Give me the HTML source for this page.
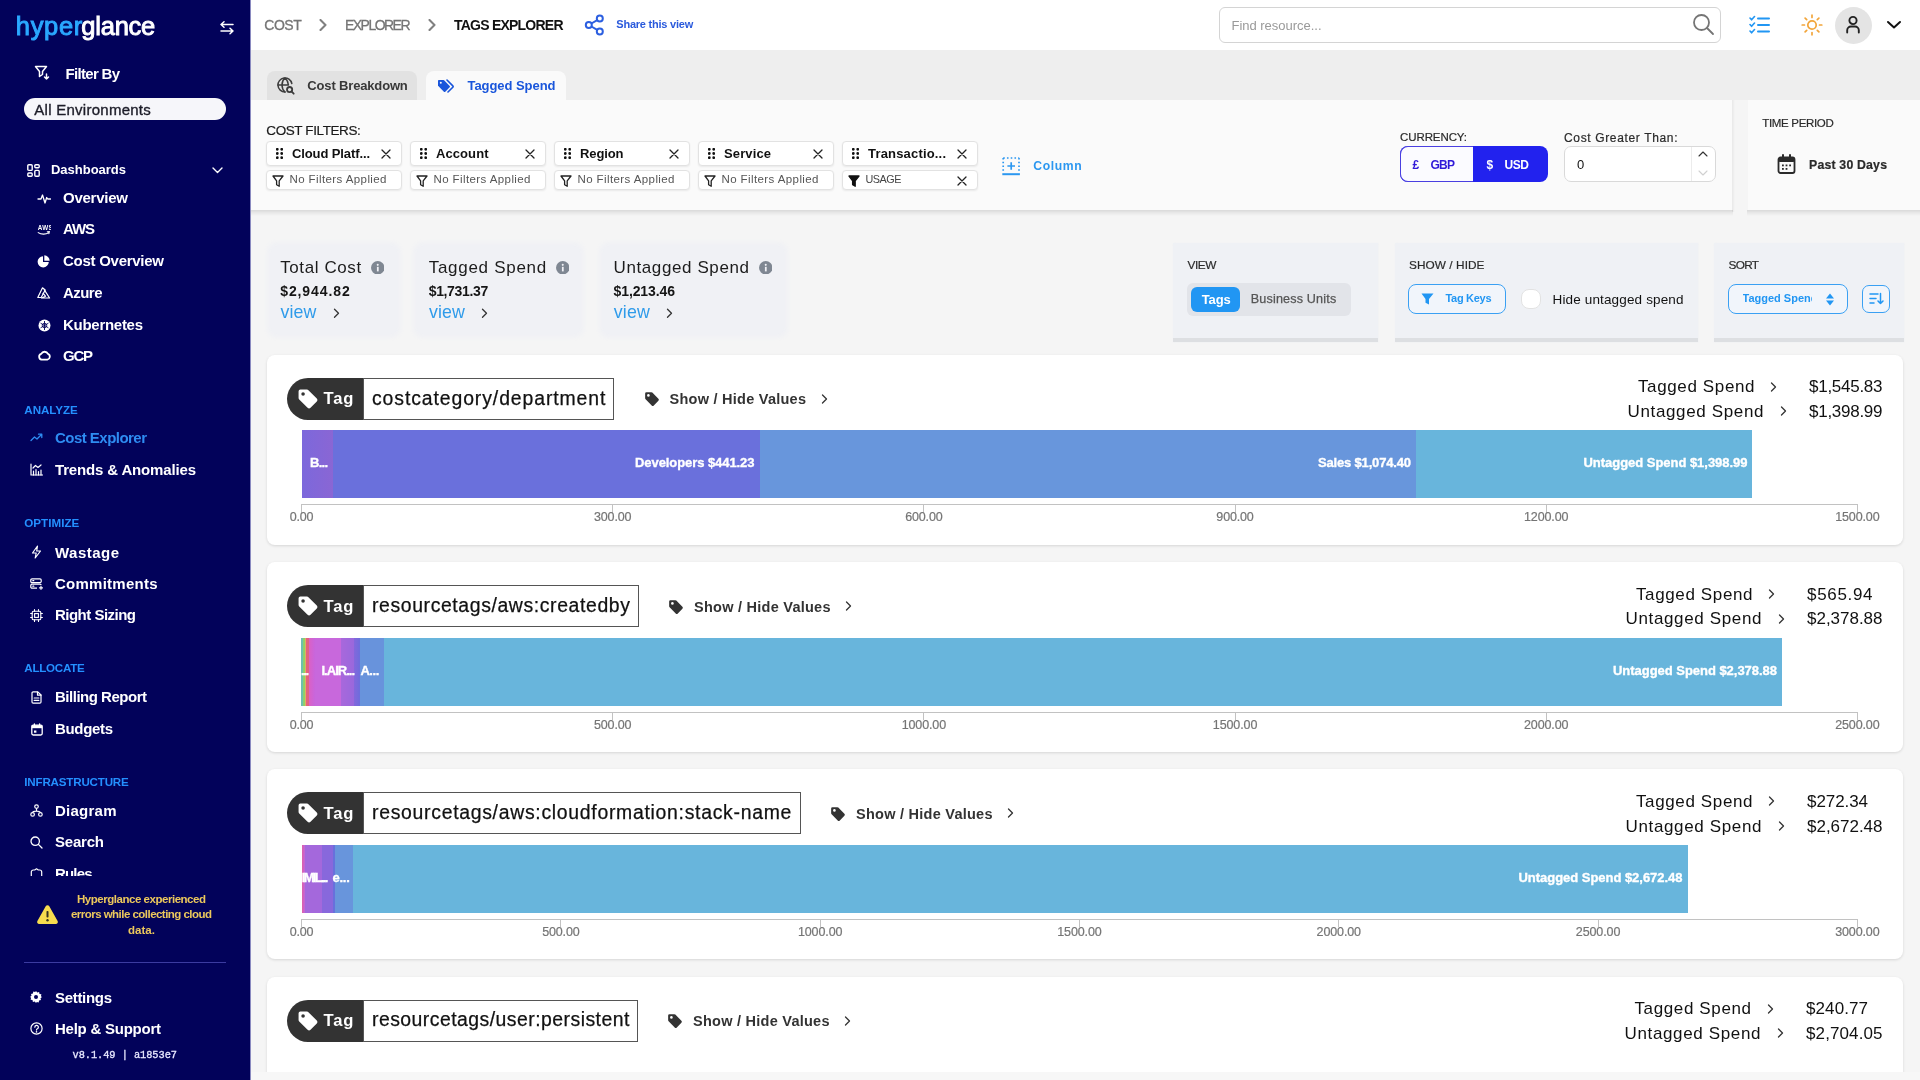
<!DOCTYPE html>
<html><head><meta charset="utf-8"><title>Hyperglance - Tags Explorer</title>
<style>
html,body{margin:0;padding:0;}
body{width:1920px;height:1080px;overflow:hidden;background:#f5f5f5;position:relative;font-family:"Liberation Sans",sans-serif;}
.b{position:absolute;box-sizing:border-box;display:block;}
.t{position:absolute;white-space:nowrap;display:block;}
#root{position:absolute;left:0;top:0;width:1920px;height:1080px;overflow:hidden;will-change:transform;}
</style></head><body><div id="root">
<div class="b" style="left:0px;top:0px;width:250px;height:1080px;background:#02025a;"></div>
<div class="b" style="left:250px;top:0px;width:1px;height:1080px;background:#8a8ac0;"></div>
<span class="t" style="top:14.31px;font:400 25.5px/1 'Liberation Sans',sans-serif;color:#2aaaff;letter-spacing:0.678px;left:15.80px;-webkit-text-stroke:0.95px #2aa7ff;">hyper</span>
<span class="t" style="top:14.31px;font:400 25.5px/1 'Liberation Sans',sans-serif;color:#ffffff;letter-spacing:-0.229px;left:81.30px;-webkit-text-stroke:0.95px #fff;">glance</span>
<svg class="b" style="left:219px;top:21px;" width="16" height="14" viewBox="0 0 16 14"><g fill="none" stroke="#fff" stroke-width="1.5" stroke-linecap="round" stroke-linejoin="round"><path d="M14 3.5H2M5 0.8l-3 2.7 3 2.7"/><path d="M2 10H14M11 7.3l3 2.7-3 2.7"/></g></svg>
<svg class="b" style="left:34px;top:65px;" width="16" height="16" viewBox="0 0 16 16"><g fill="none" stroke="#fff" stroke-width="1.5" stroke-linecap="round" stroke-linejoin="round"><path d="M1.5 1.5h11l-4 5v3l-3 2v-5z"/><path d="M12.5 9v5M10.5 12l2 2 2-2"/></g></svg>
<span class="t" style="top:66.00px;font:600 15px/1 'Liberation Sans',sans-serif;color:#ffffff;letter-spacing:-0.689px;left:65.50px;">Filter By</span>
<div class="b" style="left:24px;top:98px;width:202px;height:22px;background:#f6f6fa;border-radius:11px;"></div>
<span class="t" style="top:101.60px;font:400 15px/1 'Liberation Sans',sans-serif;color:#1c1c28;letter-spacing:0.264px;left:34.30px;-webkit-text-stroke:0.35px #1c1c28;">All Environments</span>
<svg class="b" style="left:27px;top:164px;" width="13" height="13" viewBox="0 0 13 13"><g fill="none" stroke="#fff" stroke-width="1.4"><rect x="0.8" y="0.8" width="4.4" height="5.6" rx="1"/><rect x="7.8" y="0.8" width="4.4" height="3" rx="1"/><rect x="0.8" y="9" width="4.4" height="3.2" rx="1"/><rect x="7.8" y="6.4" width="4.4" height="5.8" rx="1"/></g></svg>
<span class="t" style="top:163.00px;font:700 13px/1 'Liberation Sans',sans-serif;color:#ffffff;letter-spacing:-0.015px;left:51.00px;">Dashboards</span>
<svg class="b" style="left:212px;top:167px;" width="11" height="7" viewBox="0 0 11 7"><path d="M1 1l4.5 4.5L10 1" fill="none" stroke="#fff" stroke-width="1.4" stroke-linecap="round" stroke-linejoin="round"/></svg>
<span class="t" style="top:189.50px;font:600 15px/1 'Liberation Sans',sans-serif;color:#ffffff;letter-spacing:-0.244px;left:63.00px;">Overview</span>
<svg class="b" style="left:37px;top:192px;" width="14" height="13" viewBox="0 0 14 13"><path d="M1 7h3l1.5-4 2.5 8 1.7-5.5 1 1.5H13.5" fill="none" stroke="#fff" stroke-width="1.3" stroke-linecap="round" stroke-linejoin="round"/></svg>
<span class="t" style="top:221.30px;font:600 15px/1 'Liberation Sans',sans-serif;color:#ffffff;letter-spacing:-1.084px;left:63.00px;">AWS</span>
<svg class="b" style="left:37px;top:224px;" width="14" height="13" viewBox="0 0 14 13"><g fill="none" stroke="#fff" stroke-width="1.1" stroke-linecap="round"><path d="M1.200 8.600c3 2 7.500 2 10.300 0.300"/><path d="M10.300 7.900l2-.200-.400 1.900"/></g><text x="0.800" y="6.200" font-family="Liberation Sans" font-weight="700" font-size="6.300" letter-spacing="0.300" fill="#fff">AWS</text></svg>
<span class="t" style="top:253.30px;font:600 15px/1 'Liberation Sans',sans-serif;color:#ffffff;letter-spacing:-0.267px;left:63.00px;">Cost Overview</span>
<svg class="b" style="left:37px;top:255px;" width="13" height="13" viewBox="0 0 13 13"><path d="M6 1.2A5.6 5.6 0 1 0 11.8 7H6z" fill="#fff"/><path d="M7.3 0.3a5.6 5.6 0 0 1 5.4 5.4H7.3z" fill="#fff"/></svg>
<span class="t" style="top:285.30px;font:600 15px/1 'Liberation Sans',sans-serif;color:#ffffff;letter-spacing:-0.544px;left:63.00px;">Azure</span>
<svg class="b" style="left:37px;top:287px;" width="14" height="12" viewBox="0 0 14 12"><g fill="none" stroke="#fff" stroke-width="1.2" stroke-linejoin="round"><path d="M5.5 0.8L0.8 10.5h3.4L8.2 3z"/><path d="M7 2.4l5.6 8.6H4.5l4-1.8-2.8-3.4"/></g></svg>
<span class="t" style="top:317.30px;font:600 15px/1 'Liberation Sans',sans-serif;color:#ffffff;letter-spacing:-0.280px;left:63.00px;">Kubernetes</span>
<svg class="b" style="left:37.5px;top:319px;" width="13" height="13" viewBox="0 0 13 13"><circle cx="6.5" cy="6.5" r="6" fill="#fff"/><g stroke="#02025a" stroke-width="0.9" fill="none"><circle cx="6.5" cy="6.5" r="2.2"/><path d="M6.5 2v9M2.6 4.2l7.8 4.6M2.6 8.8l7.8-4.6"/></g></svg>
<span class="t" style="top:348.30px;font:600 15px/1 'Liberation Sans',sans-serif;color:#ffffff;letter-spacing:-1.253px;left:63.00px;">GCP</span>
<svg class="b" style="left:37.5px;top:350px;" width="13" height="11" viewBox="0 0 13 11"><path d="M3.6 9.6A3 3 0 0 1 3.2 3.8 3.8 3.8 0 0 1 10 3.9a3 3 0 0 1-.6 5.7z" fill="none" stroke="#fff" stroke-width="1.8" stroke-linejoin="round"/></svg>
<span class="t" style="top:404.38px;font:700 11.6px/1 'Liberation Sans',sans-serif;color:#2490ff;letter-spacing:-0.035px;left:24.30px;">ANALYZE</span>
<span class="t" style="top:430.30px;font:600 15px/1 'Liberation Sans',sans-serif;color:#2e8cf2;letter-spacing:-0.530px;left:55.00px;">Cost Explorer</span>
<svg class="b" style="left:30px;top:433px;" width="13" height="9" viewBox="0 0 13 9"><path d="M1 7.5l3.5-3.5 2.5 2 4.5-4.5M8.5 1.2h3.3v3.3" fill="none" stroke="#2e8cf2" stroke-width="1.3" stroke-linecap="round" stroke-linejoin="round"/></svg>
<span class="t" style="top:461.50px;font:600 15px/1 'Liberation Sans',sans-serif;color:#ffffff;letter-spacing:-0.156px;left:55.00px;">Trends &amp; Anomalies</span>
<svg class="b" style="left:30px;top:463px;" width="13" height="13" viewBox="0 0 13 13"><g fill="none" stroke="#fff" stroke-width="1.2" stroke-linecap="round" stroke-linejoin="round"><path d="M1 1v11h11.5"/><path d="M3.5 12V8M6 12V6.5M8.5 12V8.5M11 12V7"/><path d="M3 5l2.5-2.5 2.5 2 3-2.5"/></g></svg>
<span class="t" style="top:517.18px;font:700 11.6px/1 'Liberation Sans',sans-serif;color:#2490ff;letter-spacing:0.032px;left:24.30px;">OPTIMIZE</span>
<span class="t" style="top:544.50px;font:600 15px/1 'Liberation Sans',sans-serif;color:#ffffff;letter-spacing:0.479px;left:55.00px;">Wastage</span>
<svg class="b" style="left:31px;top:545px;" width="11" height="14" viewBox="0 0 11 14"><path d="M6.5 1L1.5 8h3.7L4.2 13l5.3-7H5.7z" fill="none" stroke="#fff" stroke-width="1.2" stroke-linejoin="round"/></svg>
<span class="t" style="top:575.50px;font:600 15px/1 'Liberation Sans',sans-serif;color:#ffffff;letter-spacing:0.249px;left:55.00px;">Commitments</span>
<svg class="b" style="left:30px;top:578px;" width="13" height="12" viewBox="0 0 13 12"><g fill="none" stroke="#fff" stroke-width="1.2" stroke-linejoin="round"><rect x="0.8" y="0.8" width="10.4" height="3.8" rx="1.2"/><path d="M7 10.2H2a1.2 1.2 0 0 1-1.2-1.2V7.4A1.2 1.2 0 0 1 2 6.2h8a1.2 1.2 0 0 1 1.2 1"/><path d="M2.8 2.7h1M2.8 8.2h1M11 8.3v3M9.5 9.8h3" stroke-linecap="round"/></g></svg>
<span class="t" style="top:607.30px;font:600 15px/1 'Liberation Sans',sans-serif;color:#ffffff;letter-spacing:-0.514px;left:55.00px;">Right Sizing</span>
<svg class="b" style="left:30px;top:609px;" width="13" height="13" viewBox="0 0 13 13"><g fill="none" stroke="#fff" stroke-width="1.1" stroke-linecap="round"><rect x="2.2" y="2.2" width="8.6" height="8.6" rx="1.4"/><rect x="4.6" y="4.6" width="3.8" height="3.8"/><path d="M4.5 0.6v1.6M8.5 0.6v1.6M4.5 10.8v1.6M8.5 10.8v1.6M0.6 4.5h1.6M0.6 8.5h1.6M10.8 4.5h1.6M10.8 8.5h1.6"/></g></svg>
<span class="t" style="top:662.18px;font:700 11.6px/1 'Liberation Sans',sans-serif;color:#2490ff;letter-spacing:-0.255px;left:24.30px;">ALLOCATE</span>
<span class="t" style="top:689.30px;font:600 15px/1 'Liberation Sans',sans-serif;color:#ffffff;letter-spacing:-0.487px;left:55.00px;">Billing Report</span>
<svg class="b" style="left:31px;top:691px;" width="11" height="13" viewBox="0 0 11 13"><g fill="none" stroke="#fff" stroke-width="1.2" stroke-linejoin="round" stroke-linecap="round"><path d="M1 2a1.2 1.2 0 0 1 1.2-1.2h4.6L10 4v7a1.2 1.2 0 0 1-1.2 1.2H2.2A1.2 1.2 0 0 1 1 11z"/><path d="M6.5 1v3.2H10M3.2 7h4.6M3.2 9.4h4.6"/></g></svg>
<span class="t" style="top:721.30px;font:600 15px/1 'Liberation Sans',sans-serif;color:#ffffff;letter-spacing:-0.333px;left:55.00px;">Budgets</span>
<svg class="b" style="left:30.5px;top:723px;" width="12" height="13" viewBox="0 0 12 13"><g fill="none" stroke="#fff" stroke-width="1.3" stroke-linejoin="round" stroke-linecap="round"><rect x="0.8" y="2.2" width="10.4" height="9.8" rx="1.4"/><path d="M3.4 0.8v2.4M8.6 0.8v2.4"/></g><rect x="0.8" y="2.2" width="10.4" height="3" fill="#fff"/><rect x="3" y="7.5" width="2.4" height="2.2" fill="#fff"/></svg>
<span class="t" style="top:776.18px;font:700 11.6px/1 'Liberation Sans',sans-serif;color:#2490ff;letter-spacing:-0.190px;left:24.30px;">INFRASTRUCTURE</span>
<span class="t" style="top:802.50px;font:600 15px/1 'Liberation Sans',sans-serif;color:#ffffff;letter-spacing:0.246px;left:55.00px;">Diagram</span>
<svg class="b" style="left:30px;top:804px;" width="13" height="13" viewBox="0 0 13 13"><g fill="none" stroke="#fff" stroke-width="1.2"><circle cx="6.5" cy="2.6" r="1.8"/><circle cx="2.6" cy="10.4" r="1.8"/><circle cx="10.4" cy="10.4" r="1.8"/><path d="M6.5 4.4v2.4M2.6 8.6c0-2 7.8-2 7.8 0"/></g></svg>
<span class="t" style="top:834.30px;font:600 15px/1 'Liberation Sans',sans-serif;color:#ffffff;letter-spacing:-0.206px;left:55.00px;">Search</span>
<svg class="b" style="left:30px;top:836px;" width="13" height="13" viewBox="0 0 13 13"><g fill="none" stroke="#fff" stroke-width="1.3" stroke-linecap="round"><circle cx="5.2" cy="5.2" r="4.2"/><path d="M8.4 8.4l3.6 3.6"/></g></svg>
<div class="b" style="left:0;top:860px;width:250px;height:16.2px;overflow:hidden;"><span class="t" style="top:5.50px;font:600 15px/1 'Liberation Sans',sans-serif;color:#ffffff;letter-spacing:-0.837px;left:55.00px;">Rules</span><svg class="b" style="left:30px;top:7px;" width="13" height="13" viewBox="0 0 13 13"><path d="M1.300 11V5a2 2 0 0 1 2-2h1.400l1.800-1.200L8.300 3h1.400a2 2 0 0 1 2 2v6" fill="none" stroke="#fff" stroke-width="1.200" stroke-linejoin="round"/></svg></div>
<svg class="b" style="left:35.5px;top:904px;" width="23" height="21" viewBox="0 0 23 21"><path d="M11.5 1.2c.8 0 1.4.4 1.8 1.1l8.3 14.6c.8 1.4-.2 3.1-1.8 3.1H3.2c-1.6 0-2.6-1.7-1.8-3.1L9.7 2.3c.4-.7 1-1.1 1.800-1.100z" fill="#f7dc4e"/><rect x="10.5" y="7" width="2" height="6.6" rx="0.8" fill="#3a3520"/><circle cx="11.5" cy="16.3" r="1.2" fill="#3a3520"/></svg>
<span class="t" style="top:893.57px;font:600 11.5px/1 'Liberation Sans',sans-serif;color:#ecc85c;letter-spacing:-0.470px;left:-358.50px;width:1000px;text-align:center;text-indent:-0.470px;">Hyperglance experienced</span>
<span class="t" style="top:908.77px;font:600 11.5px/1 'Liberation Sans',sans-serif;color:#ecc85c;letter-spacing:-0.533px;left:-358.50px;width:1000px;text-align:center;text-indent:-0.533px;">errors while collecting cloud</span>
<span class="t" style="top:924.57px;font:600 11.5px/1 'Liberation Sans',sans-serif;color:#ecc85c;letter-spacing:0.040px;left:-358.50px;width:1000px;text-align:center;text-indent:0.040px;">data.</span>
<div class="b" style="left:24px;top:961.5px;width:202px;height:1.0px;background:#3b3ba0;"></div>
<span class="t" style="top:989.50px;font:600 15px/1 'Liberation Sans',sans-serif;color:#ffffff;letter-spacing:-0.310px;left:55.00px;">Settings</span>
<svg class="b" style="left:29.5px;top:991px;" width="12" height="12" viewBox="0 0 12 12"><path d="M6 0l1.2 1.5 1.9-.5.4 1.9 1.9.4-.5 1.9L12 6l-1.500 1.200.5 1.9-1.9.4-.4 1.9-1.900-.500L6 12l-1.200-1.500-1.900.5-.4-1.900-1.900-.400.5-1.900L0 6l1.500-1.200-.5-1.900 1.900-.400.4-1.900 1.900.5z" fill="#fff"/><circle cx="6" cy="6" r="2" fill="#02025a"/></svg>
<span class="t" style="top:1020.50px;font:600 15px/1 'Liberation Sans',sans-serif;color:#ffffff;letter-spacing:-0.243px;left:55.00px;">Help &amp; Support</span>
<svg class="b" style="left:29.5px;top:1022px;" width="13" height="13" viewBox="0 0 13 13"><circle cx="6.5" cy="6.5" r="5.6" fill="none" stroke="#fff" stroke-width="1.2"/><path d="M4.800 5.200a1.8 1.800 0 1 1 2.600 1.600c-.6.3-.9.700-.9 1.300" fill="none" stroke="#fff" stroke-width="1.200" stroke-linecap="round"/><circle cx="6.5" cy="9.900" r=".8" fill="#fff"/></svg>
<span class="t" style="top:1050.28px;font:400 10.3px/1 'Liberation Mono',monospace;color:#e8e8ff;letter-spacing:-0.036px;left:72.50px;-webkit-text-stroke:0.3px #e8e8ff;">v8.1.49 | a1853e7</span>
<div class="b" style="left:251px;top:0px;width:1669px;height:50px;background:#ffffff;"></div>
<div class="b" style="left:251px;top:50px;width:1669px;height:50px;background:#eeeeee;"></div>
<span class="t" style="top:18.15px;font:400 14px/1 'Liberation Sans',sans-serif;color:#757575;letter-spacing:-0.463px;left:264.30px;-webkit-text-stroke:0.3px #757575;">COST</span>
<svg class="b" style="left:319px;top:19px;" width="8" height="12" viewBox="0 0 8 12"><path d="M1.5 1l5 5-5 5" fill="none" stroke="#808080" stroke-width="2.1" stroke-linecap="round" stroke-linejoin="round"/></svg>
<span class="t" style="top:18.15px;font:400 14px/1 'Liberation Sans',sans-serif;color:#757575;letter-spacing:-1.536px;left:345.00px;-webkit-text-stroke:0.3px #757575;">EXPLORER</span>
<svg class="b" style="left:428px;top:19px;" width="8" height="12" viewBox="0 0 8 12"><path d="M1.5 1l5 5-5 5" fill="none" stroke="#808080" stroke-width="2.1" stroke-linecap="round" stroke-linejoin="round"/></svg>
<span class="t" style="top:18.15px;font:700 14px/1 'Liberation Sans',sans-serif;color:#111;letter-spacing:-0.771px;left:454.00px;">TAGS EXPLORER</span>
<svg class="b" style="left:583.5px;top:13.5px;" width="22" height="22" viewBox="0 0 22 22"><g fill="none" stroke="#2c5fe0" stroke-width="2"><circle cx="15.8" cy="4.5" r="3"/><circle cx="4.800" cy="11" r="3"/><circle cx="15.800" cy="17.500" r="3"/><path d="M7.400 9.500l5.800-3.400M7.400 12.500l5.800 3.400"/></g></svg>
<span class="t" style="top:18.69px;font:700 11px/1 'Liberation Sans',sans-serif;color:#2a5adc;letter-spacing:-0.221px;left:616.30px;">Share this view</span>
<div class="b" style="left:1219px;top:7px;width:502px;height:36px;background:#fff;border:1px solid #d4d4d4;border-radius:6px;"></div>
<span class="t" style="top:19.00px;font:400 13px/1 'Liberation Sans',sans-serif;color:#9a9a9a;letter-spacing:-0.021px;left:1231.50px;">Find resource...</span>
<svg class="b" style="left:1692px;top:13px;" width="23" height="23" viewBox="0 0 23 23"><g fill="none" stroke="#757575" stroke-width="1.8" stroke-linecap="round"><circle cx="9.500" cy="9.500" r="7.5"/><path d="M15 15l6 6"/></g></svg>
<svg class="b" style="left:1749px;top:15px;" width="22" height="20" viewBox="0 0 22 20"><g fill="none" stroke="#2196f3" stroke-width="2" stroke-linecap="round" stroke-linejoin="round"><path d="M9 3.500h11M9 10h11M9 16.500h11"/><path d="M1 3l1.600 1.800L5.500 1.500M1 9.500l1.600 1.800L5.500 8M1 16l1.600 1.800L5.500 14.500" stroke-width="1.600"/></g></svg>
<svg class="b" style="left:1800.5px;top:13.5px;" width="22" height="22" viewBox="0 0 22 22"><g fill="none" stroke="#f2a53a" stroke-width="1.700" stroke-linecap="round"><circle cx="11" cy="11" r="4.200"/><path d="M11 1.200v2.300M11 18.500v2.300M1.200 11h2.300M18.500 11h2.300M4.100 4.100l1.600 1.600M16.300 16.300l1.600 1.600M4.100 17.900l1.600-1.600M16.300 5.700l1.600-1.600"/></g></svg>
<div class="b" style="left:1834.5px;top:6.5px;width:37.0px;height:37.0px;background:#e4e4e4;border-radius:50%;"></div>
<svg class="b" style="left:1845px;top:15px;" width="16" height="20" viewBox="0 0 16 20"><g fill="none" stroke="#222" stroke-width="1.900" stroke-linecap="round"><circle cx="8" cy="5.500" r="3.600"/><path d="M2.200 17.500v-2.200a3.800 3.800 0 0 1 3.800-3.800h4a3.800 3.800 0 0 1 3.800 3.800v2.200"/></g></svg>
<svg class="b" style="left:1886px;top:20px;" width="16" height="10" viewBox="0 0 16 10"><path d="M2 2l6 5.500L14 2" fill="none" stroke="#111" stroke-width="2" stroke-linecap="round" stroke-linejoin="round"/></svg>
<div class="b" style="left:267px;top:71px;width:150px;height:29px;background:#e2e2e2;border-radius:8px 8px 0 0;"></div>
<svg class="b" style="left:277px;top:77px;" width="18" height="18" viewBox="0 0 18 18"><g fill="none" stroke="#3c3c3c" stroke-width="1.500" stroke-linecap="round"><path d="M14.800 6.500A7 7 0 1 0 8 15"/><path d="M1 8h10.500M8 1c-4 3.500-4 10.500 0 14M8 1c2.200 2 3.200 4.300 3.300 6.500"/><circle cx="12.600" cy="12.600" r="2.600" stroke-width="1.800"/><path d="M14.700 14.700l2 2" stroke-width="1.800"/></g></svg>
<span class="t" style="top:79.30px;font:700 13px/1 'Liberation Sans',sans-serif;color:#383838;letter-spacing:-0.159px;left:307.30px;">Cost Breakdown</span>
<div class="b" style="left:426px;top:71px;width:139.5px;height:29px;background:#fafafa;border-radius:8px 8px 0 0;"></div>
<svg class="b" style="left:437px;top:79px;" width="17" height="14" viewBox="0 0 17 14"><path d="M1 1.800A.8.800 0 0 1 1.800 1h4.600a1 1 0 0 1 .7.300l5.600 5.600a1 1 0 0 1 0 1.400l-4.400 4.400a1 1 0 0 1-1.400 0L1.300 7.100A1 1 0 0 1 1 6.400z" fill="#1a56db"/><circle cx="3.800" cy="3.800" r="1" fill="#fafafa"/><path d="M10 1l5.800 5.900a1 1 0 0 1 0 1.400L11 13" fill="none" stroke="#1a56db" stroke-width="1.600" stroke-linecap="round"/></svg>
<span class="t" style="top:79.30px;font:700 13px/1 'Liberation Sans',sans-serif;color:#1a56db;letter-spacing:-0.054px;left:467.50px;">Tagged Spend</span>
<div class="b" style="left:251px;top:100px;width:1481px;height:110px;background:#fafafa;"></div>
<div class="b" style="left:251px;top:210px;width:1482px;height:6px;background:linear-gradient(180deg,rgba(0,0,0,0.115),rgba(0,0,0,0.05) 45%,rgba(0,0,0,0));"></div>
<div class="b" style="left:1732px;top:100px;width:3px;height:112px;background:linear-gradient(90deg,rgba(0,0,0,0.05),rgba(0,0,0,0));"></div>
<div class="b" style="left:1747.5px;top:100px;width:172.5px;height:110px;background:#fafafa;"></div>
<div class="b" style="left:1747px;top:210px;width:173px;height:6px;background:linear-gradient(180deg,rgba(0,0,0,0.115),rgba(0,0,0,0.05) 45%,rgba(0,0,0,0));"></div>
<span class="t" style="top:123.57px;font:400 13.5px/1 'Liberation Sans',sans-serif;color:#1a1a1a;letter-spacing:-0.397px;left:266.30px;-webkit-text-stroke:0.200px #1a1a1a;">COST FILTERS:</span>
<div class="b" style="left:266px;top:141px;width:136px;height:24.5px;background:#fff;border:1px solid #e2e2e2;border-radius:4px;box-shadow:0 1px 2px rgba(0,0,0,0.07);"></div>
<svg class="b" style="left:275.5px;top:147.7px;" width="7" height="11" viewBox="0 0 7 11"><g fill="#111"><circle cx="1.300" cy="1.300" r="1.400"/><circle cx="5.700" cy="1.300" r="1.400"/><circle cx="1.300" cy="5.500" r="1.400"/><circle cx="5.700" cy="5.500" r="1.400"/><circle cx="1.300" cy="9.700" r="1.400"/><circle cx="5.700" cy="9.700" r="1.400"/></g></svg>
<span class="t" style="top:146.70px;font:700 13px/1 'Liberation Sans',sans-serif;color:#111;letter-spacing:-0.111px;left:292.00px;">Cloud Platf...</span>
<svg class="b" style="left:380.5px;top:148.5px;" width="10" height="10" viewBox="0 0 10 10"><path d="M1 1l8 8M9 1l-8 8" fill="none" stroke="#222" stroke-width="1.300" stroke-linecap="round"/></svg>
<div class="b" style="left:266px;top:170.2px;width:136px;height:20.100000000000023px;background:#fff;border:1px solid #e2e2e2;border-radius:4px;box-shadow:0 1px 2px rgba(0,0,0,0.07);"></div>
<svg class="b" style="left:272px;top:174.5px;" width="12" height="12" viewBox="0 0 12 12"><path d="M1 1h10L7.200 5.800v5.500l-2.600-1.500V5.800z" fill="none" stroke="#222" stroke-width="1.300" stroke-linejoin="round"/></svg>
<span class="t" style="top:173.77px;font:400 11.5px/1 'Liberation Sans',sans-serif;color:#555;letter-spacing:0.404px;left:289.50px;">No Filters Applied</span>
<div class="b" style="left:410px;top:141px;width:136px;height:24.5px;background:#fff;border:1px solid #e2e2e2;border-radius:4px;box-shadow:0 1px 2px rgba(0,0,0,0.07);"></div>
<svg class="b" style="left:419.5px;top:147.7px;" width="7" height="11" viewBox="0 0 7 11"><g fill="#111"><circle cx="1.300" cy="1.300" r="1.400"/><circle cx="5.700" cy="1.300" r="1.400"/><circle cx="1.300" cy="5.500" r="1.400"/><circle cx="5.700" cy="5.500" r="1.400"/><circle cx="1.300" cy="9.700" r="1.400"/><circle cx="5.700" cy="9.700" r="1.400"/></g></svg>
<span class="t" style="top:146.70px;font:700 13px/1 'Liberation Sans',sans-serif;color:#111;letter-spacing:0.083px;left:436.00px;">Account</span>
<svg class="b" style="left:524.5px;top:148.5px;" width="10" height="10" viewBox="0 0 10 10"><path d="M1 1l8 8M9 1l-8 8" fill="none" stroke="#222" stroke-width="1.300" stroke-linecap="round"/></svg>
<div class="b" style="left:410px;top:170.2px;width:136px;height:20.100000000000023px;background:#fff;border:1px solid #e2e2e2;border-radius:4px;box-shadow:0 1px 2px rgba(0,0,0,0.07);"></div>
<svg class="b" style="left:416px;top:174.5px;" width="12" height="12" viewBox="0 0 12 12"><path d="M1 1h10L7.200 5.800v5.500l-2.600-1.500V5.800z" fill="none" stroke="#222" stroke-width="1.300" stroke-linejoin="round"/></svg>
<span class="t" style="top:173.77px;font:400 11.5px/1 'Liberation Sans',sans-serif;color:#555;letter-spacing:0.404px;left:433.50px;">No Filters Applied</span>
<div class="b" style="left:554px;top:141px;width:136px;height:24.5px;background:#fff;border:1px solid #e2e2e2;border-radius:4px;box-shadow:0 1px 2px rgba(0,0,0,0.07);"></div>
<svg class="b" style="left:563.5px;top:147.7px;" width="7" height="11" viewBox="0 0 7 11"><g fill="#111"><circle cx="1.300" cy="1.300" r="1.400"/><circle cx="5.700" cy="1.300" r="1.400"/><circle cx="1.300" cy="5.500" r="1.400"/><circle cx="5.700" cy="5.500" r="1.400"/><circle cx="1.300" cy="9.700" r="1.400"/><circle cx="5.700" cy="9.700" r="1.400"/></g></svg>
<span class="t" style="top:146.70px;font:700 13px/1 'Liberation Sans',sans-serif;color:#111;letter-spacing:-0.111px;left:580.00px;">Region</span>
<svg class="b" style="left:668.5px;top:148.5px;" width="10" height="10" viewBox="0 0 10 10"><path d="M1 1l8 8M9 1l-8 8" fill="none" stroke="#222" stroke-width="1.300" stroke-linecap="round"/></svg>
<div class="b" style="left:554px;top:170.2px;width:136px;height:20.100000000000023px;background:#fff;border:1px solid #e2e2e2;border-radius:4px;box-shadow:0 1px 2px rgba(0,0,0,0.07);"></div>
<svg class="b" style="left:560px;top:174.5px;" width="12" height="12" viewBox="0 0 12 12"><path d="M1 1h10L7.200 5.800v5.500l-2.600-1.500V5.800z" fill="none" stroke="#222" stroke-width="1.300" stroke-linejoin="round"/></svg>
<span class="t" style="top:173.77px;font:400 11.5px/1 'Liberation Sans',sans-serif;color:#555;letter-spacing:0.404px;left:577.50px;">No Filters Applied</span>
<div class="b" style="left:698px;top:141px;width:136px;height:24.5px;background:#fff;border:1px solid #e2e2e2;border-radius:4px;box-shadow:0 1px 2px rgba(0,0,0,0.07);"></div>
<svg class="b" style="left:707.5px;top:147.7px;" width="7" height="11" viewBox="0 0 7 11"><g fill="#111"><circle cx="1.300" cy="1.300" r="1.400"/><circle cx="5.700" cy="1.300" r="1.400"/><circle cx="1.300" cy="5.500" r="1.400"/><circle cx="5.700" cy="5.500" r="1.400"/><circle cx="1.300" cy="9.700" r="1.400"/><circle cx="5.700" cy="9.700" r="1.400"/></g></svg>
<span class="t" style="top:146.70px;font:700 13px/1 'Liberation Sans',sans-serif;color:#111;letter-spacing:0.123px;left:724.00px;">Service</span>
<svg class="b" style="left:812.5px;top:148.5px;" width="10" height="10" viewBox="0 0 10 10"><path d="M1 1l8 8M9 1l-8 8" fill="none" stroke="#222" stroke-width="1.300" stroke-linecap="round"/></svg>
<div class="b" style="left:698px;top:170.2px;width:136px;height:20.100000000000023px;background:#fff;border:1px solid #e2e2e2;border-radius:4px;box-shadow:0 1px 2px rgba(0,0,0,0.07);"></div>
<svg class="b" style="left:704px;top:174.5px;" width="12" height="12" viewBox="0 0 12 12"><path d="M1 1h10L7.200 5.800v5.500l-2.600-1.500V5.800z" fill="none" stroke="#222" stroke-width="1.300" stroke-linejoin="round"/></svg>
<span class="t" style="top:173.77px;font:400 11.5px/1 'Liberation Sans',sans-serif;color:#555;letter-spacing:0.404px;left:721.50px;">No Filters Applied</span>
<div class="b" style="left:842px;top:141px;width:136px;height:24.5px;background:#fff;border:1px solid #e2e2e2;border-radius:4px;box-shadow:0 1px 2px rgba(0,0,0,0.07);"></div>
<svg class="b" style="left:851.5px;top:147.7px;" width="7" height="11" viewBox="0 0 7 11"><g fill="#111"><circle cx="1.300" cy="1.300" r="1.400"/><circle cx="5.700" cy="1.300" r="1.400"/><circle cx="1.300" cy="5.500" r="1.400"/><circle cx="5.700" cy="5.500" r="1.400"/><circle cx="1.300" cy="9.700" r="1.400"/><circle cx="5.700" cy="9.700" r="1.400"/></g></svg>
<span class="t" style="top:146.70px;font:700 13px/1 'Liberation Sans',sans-serif;color:#111;letter-spacing:0.178px;left:868.00px;">Transactio...</span>
<svg class="b" style="left:956.5px;top:148.5px;" width="10" height="10" viewBox="0 0 10 10"><path d="M1 1l8 8M9 1l-8 8" fill="none" stroke="#222" stroke-width="1.300" stroke-linecap="round"/></svg>
<div class="b" style="left:842px;top:170.2px;width:136px;height:20.100000000000023px;background:#fff;border:1px solid #e2e2e2;border-radius:4px;box-shadow:0 1px 2px rgba(0,0,0,0.07);"></div>
<svg class="b" style="left:848px;top:174.5px;" width="12" height="12" viewBox="0 0 12 12"><path d="M1 1h10L7.200 5.800v5.500l-2.600-1.500V5.800z" fill="#111" stroke="#111" stroke-width="1.300" stroke-linejoin="round"/></svg>
<span class="t" style="top:174.36px;font:400 10.8px/1 'Liberation Sans',sans-serif;color:#444;letter-spacing:-0.453px;left:865.50px;">USAGE</span>
<svg class="b" style="left:956.5px;top:175.5px;" width="10" height="10" viewBox="0 0 10 10"><path d="M1 1l8 8M9 1l-8 8" fill="none" stroke="#222" stroke-width="1.300" stroke-linecap="round"/></svg>
<svg class="b" style="left:1001px;top:155.5px;" width="20" height="20" viewBox="0 0 20 20"><g fill="none" stroke="#2b97f0"><path d="M2.200 2h16M2.200 2v13M18 2v13" stroke-width="1.700" stroke-dasharray="1.600 2.150"/><path d="M10.200 6.200v7.600M6.400 10h7.600" stroke-width="1.700"/><path d="M1.300 18.200h17.600" stroke-width="2"/></g></svg>
<span class="t" style="top:160.17px;font:700 12.2px/1 'Liberation Sans',sans-serif;color:#2b97f0;letter-spacing:0.599px;left:1033.30px;">Column</span>
<span class="t" style="top:132.47px;font:400 11.5px/1 'Liberation Sans',sans-serif;color:#2a2a2a;letter-spacing:-0.091px;left:1400.00px;-webkit-text-stroke:0.200px #2a2a2a;">CURRENCY:</span>
<div class="b" style="left:1399.5px;top:146px;width:148.5px;height:36px;background:#2222ee;border-radius:8px;"></div>
<div class="b" style="left:1399.5px;top:146px;width:73.5px;height:36px;background:#fbfbff;border:1px solid #4a3fe0;border-right:0;border-radius:8px 0 0 8px;"></div>
<span class="t" style="top:158.54px;font:700 12px/1 'Liberation Sans',sans-serif;color:#3019d8;letter-spacing:0.000px;left:1412.50px;">£</span>
<span class="t" style="top:158.54px;font:700 12px/1 'Liberation Sans',sans-serif;color:#3019d8;letter-spacing:-0.752px;left:1430.50px;">GBP</span>
<span class="t" style="top:158.54px;font:700 12px/1 'Liberation Sans',sans-serif;color:#fff;letter-spacing:0.000px;left:1486.50px;">$</span>
<span class="t" style="top:158.54px;font:700 12px/1 'Liberation Sans',sans-serif;color:#fff;letter-spacing:-0.418px;left:1504.50px;">USD</span>
<span class="t" style="top:132.04px;font:400 12px/1 'Liberation Sans',sans-serif;color:#2a2a2a;letter-spacing:0.647px;left:1564.00px;-webkit-text-stroke:0.200px #2a2a2a;">Cost Greater Than:</span>
<div class="b" style="left:1564px;top:146px;width:152px;height:36px;background:#fff;border:1px solid #d9d9d9;border-radius:7px;"></div>
<div class="b" style="left:1691px;top:147px;width:1px;height:34px;background:#ececec;"></div>
<span class="t" style="top:158.30px;font:400 13px/1 'Liberation Sans',sans-serif;color:#111;letter-spacing:0.000px;left:1577.00px;">0</span>
<svg class="b" style="left:1698px;top:151px;" width="10" height="6" viewBox="0 0 10 6"><path d="M1 5l4-4 4 4" fill="none" stroke="#333" stroke-width="1.100" stroke-linecap="round" stroke-linejoin="round"/></svg>
<svg class="b" style="left:1698px;top:170px;" width="10" height="6" viewBox="0 0 10 6"><path d="M1 1l4 4 4-4" fill="none" stroke="#d0d0d0" stroke-width="1.100" stroke-linecap="round" stroke-linejoin="round"/></svg>
<span class="t" style="top:118.17px;font:400 11.5px/1 'Liberation Sans',sans-serif;color:#2a2a2a;letter-spacing:-0.326px;left:1762.30px;-webkit-text-stroke:0.200px #2a2a2a;">TIME PERIOD</span>
<svg class="b" style="left:1776.5px;top:153.5px;" width="20" height="21" viewBox="0 0 20 21"><g fill="none" stroke="#2a2a2a" stroke-width="1.800" stroke-linejoin="round"><rect x="1.500" y="3.500" width="16" height="15.500" rx="2"/></g><rect x="1.500" y="3.500" width="16" height="4.500" rx="1.500" fill="#2a2a2a"/><path d="M6 1v3.500M13 1v3.500" stroke="#2a2a2a" stroke-width="2" stroke-linecap="round"/><g fill="#2a2a2a"><rect x="5" y="10.500" width="1.800" height="1.800"/><rect x="8.600" y="10.500" width="1.800" height="1.800"/><rect x="12.200" y="10.500" width="1.800" height="1.800"/><rect x="5" y="14" width="1.800" height="1.800"/><rect x="8.600" y="14" width="1.800" height="1.800"/></g></svg>
<span class="t" style="top:158.59px;font:700 12.3px/1 'Liberation Sans',sans-serif;color:#2a2a2a;letter-spacing:0.191px;left:1809.00px;-webkit-text-stroke:0.200px #2a2a2a;">Past 30 Days</span>
<div class="b" style="left:271px;top:246px;width:126px;height:88px;background:#f0f1f5;border-radius:6px;box-shadow:0 0 4px 4px #f0f1f5;"></div>
<span class="t" style="top:258.71px;font:400 17px/1 'Liberation Sans',sans-serif;color:#1c1c1c;letter-spacing:0.601px;left:280.20px;">Total Cost</span>
<svg class="b" style="left:370.75px;top:260.75px;" width="13.5" height="13.5" viewBox="0 0 13 13"><circle cx="6.500" cy="6.500" r="6.500" fill="#7f8792"/><rect x="5.700" y="5.600" width="1.700" height="4.400" fill="#f0f1f5"/><circle cx="6.500" cy="3.700" r="1" fill="#f0f1f5"/></svg>
<span class="t" style="top:284.15px;font:700 14px/1 'Liberation Sans',sans-serif;color:#151515;letter-spacing:0.902px;left:280.20px;">$2,944.82</span>
<span class="t" style="top:304.13px;font:400 17.8px/1 'Liberation Sans',sans-serif;color:#2f9bea;letter-spacing:0.130px;left:280.50px;">view</span>
<svg class="b" style="left:332.7px;top:308px;" width="7" height="10.5" viewBox="0 0 7 10"><path d="M1.500 1l4 4-4 4" fill="none" stroke="#333" stroke-width="1.300" stroke-linecap="round" stroke-linejoin="round"/></svg>
<div class="b" style="left:416.5px;top:246px;width:163.5px;height:88px;background:#f0f1f5;border-radius:6px;box-shadow:0 0 4px 4px #f0f1f5;"></div>
<span class="t" style="top:258.71px;font:400 17px/1 'Liberation Sans',sans-serif;color:#1c1c1c;letter-spacing:0.713px;left:428.70px;">Tagged Spend</span>
<svg class="b" style="left:555.75px;top:260.75px;" width="13.5" height="13.5" viewBox="0 0 13 13"><circle cx="6.500" cy="6.500" r="6.500" fill="#7f8792"/><rect x="5.700" y="5.600" width="1.700" height="4.400" fill="#f0f1f5"/><circle cx="6.500" cy="3.700" r="1" fill="#f0f1f5"/></svg>
<span class="t" style="top:284.15px;font:700 14px/1 'Liberation Sans',sans-serif;color:#151515;letter-spacing:-0.348px;left:428.70px;">$1,731.37</span>
<span class="t" style="top:304.13px;font:400 17.8px/1 'Liberation Sans',sans-serif;color:#2f9bea;letter-spacing:0.130px;left:429.00px;">view</span>
<svg class="b" style="left:481.2px;top:308px;" width="7" height="10.5" viewBox="0 0 7 10"><path d="M1.500 1l4 4-4 4" fill="none" stroke="#333" stroke-width="1.300" stroke-linecap="round" stroke-linejoin="round"/></svg>
<div class="b" style="left:602.5px;top:246px;width:181.0px;height:88px;background:#f0f1f5;border-radius:6px;box-shadow:0 0 4px 4px #f0f1f5;"></div>
<span class="t" style="top:258.71px;font:400 17px/1 'Liberation Sans',sans-serif;color:#1c1c1c;letter-spacing:0.607px;left:613.50px;">Untagged Spend</span>
<svg class="b" style="left:758.55px;top:260.75px;" width="13.5" height="13.5" viewBox="0 0 13 13"><circle cx="6.500" cy="6.500" r="6.500" fill="#7f8792"/><rect x="5.700" y="5.600" width="1.700" height="4.400" fill="#f0f1f5"/><circle cx="6.500" cy="3.700" r="1" fill="#f0f1f5"/></svg>
<span class="t" style="top:284.15px;font:700 14px/1 'Liberation Sans',sans-serif;color:#151515;letter-spacing:-0.098px;left:613.50px;">$1,213.46</span>
<span class="t" style="top:304.13px;font:400 17.8px/1 'Liberation Sans',sans-serif;color:#2f9bea;letter-spacing:0.130px;left:613.80px;">view</span>
<svg class="b" style="left:666.0px;top:308px;" width="7" height="10.5" viewBox="0 0 7 10"><path d="M1.500 1l4 4-4 4" fill="none" stroke="#333" stroke-width="1.300" stroke-linecap="round" stroke-linejoin="round"/></svg>
<div class="b" style="left:1173px;top:243px;width:205px;height:99px;background:#eff1f5;border-bottom:4px solid #dddfe2;box-shadow:0 0 1.500px 0.500px #eceef2;"></div>
<span class="t" style="top:259.71px;font:400 11.8px/1 'Liberation Sans',sans-serif;color:#2a2a2a;letter-spacing:-0.386px;left:1187.50px;-webkit-text-stroke:0.200px #2a2a2a;">VIEW</span>
<div class="b" style="left:1394.5px;top:243px;width:303.5px;height:99px;background:#eff1f5;border-bottom:4px solid #dddfe2;box-shadow:0 0 1.500px 0.500px #eceef2;"></div>
<span class="t" style="top:259.71px;font:400 11.8px/1 'Liberation Sans',sans-serif;color:#2a2a2a;letter-spacing:0.076px;left:1409.00px;-webkit-text-stroke:0.200px #2a2a2a;">SHOW / HIDE</span>
<div class="b" style="left:1714px;top:243px;width:189.5px;height:99px;background:#eff1f5;border-bottom:4px solid #dddfe2;box-shadow:0 0 1.500px 0.500px #eceef2;"></div>
<span class="t" style="top:259.71px;font:400 11.8px/1 'Liberation Sans',sans-serif;color:#2a2a2a;letter-spacing:-0.688px;left:1728.50px;-webkit-text-stroke:0.200px #2a2a2a;">SORT</span>
<div class="b" style="left:1187px;top:282.5px;width:164px;height:33.5px;background:#e2e4e9;border-radius:6px;"></div>
<div class="b" style="left:1191px;top:287px;width:49.299999999999955px;height:24.5px;background:#2196f3;border-radius:6px;"></div>
<span class="t" style="top:293.10px;font:700 13px/1 'Liberation Sans',sans-serif;color:#fff;letter-spacing:-0.126px;left:1201.70px;">Tags</span>
<span class="t" style="top:293.43px;font:400 12.6px/1 'Liberation Sans',sans-serif;color:#555;letter-spacing:0.174px;left:1250.70px;-webkit-text-stroke:0.250px #555;">Business Units</span>
<div class="b" style="left:1408px;top:283.5px;width:98px;height:30.0px;background:#f1f5fb;border:1px solid #3aa0f3;border-radius:8px;"></div>
<svg class="b" style="left:1420.5px;top:292.5px;" width="13" height="12" viewBox="0 0 13 12"><path d="M0.500 0.500h12L8 6v5.500l-3.500-1.800V6z" fill="#2196f3"/></svg>
<span class="t" style="top:292.69px;font:700 11px/1 'Liberation Sans',sans-serif;color:#2196f3;letter-spacing:-0.299px;left:1445.50px;">Tag Keys</span>
<div class="b" style="left:1520.5px;top:289px;width:20.0px;height:20px;background:#fff;border:1px solid #e2e2e2;border-radius:8px;"></div>
<span class="t" style="top:292.57px;font:400 13.5px/1 'Liberation Sans',sans-serif;color:#111;letter-spacing:0.147px;left:1552.50px;">Hide untagged spend</span>
<div class="b" style="left:1727.5px;top:283.5px;width:120.5px;height:30.0px;background:#f1f5fb;border:1px solid #3aa0f3;border-radius:8px;"></div>
<div class="b" style="left:1742.500px;top:288px;width:69px;height:20px;overflow:hidden;"><span class="t" style="top:4.69px;font:700 11px/1 'Liberation Sans',sans-serif;color:#2196f3;letter-spacing:0.003px;left:0.00px;">Tagged Spend</span></div>
<svg class="b" style="left:1824.5px;top:292.5px;" width="10" height="13" viewBox="0 0 10 13"><path d="M5 0.500l4 5H1zM5 12.500l-4-5h8z" fill="#2196f3"/></svg>
<div class="b" style="left:1862px;top:285px;width:28px;height:27.5px;background:#f1f5fb;border:1px solid #3aa0f3;border-radius:7px;"></div>
<svg class="b" style="left:1869px;top:292px;" width="15" height="13" viewBox="0 0 15 13"><g fill="none" stroke="#2196f3" stroke-width="1.500" stroke-linecap="round" stroke-linejoin="round"><path d="M1 2h8M1 6.500h6M1 11h4"/><path d="M11.500 1.500v10M9 9l2.500 2.500L14 9"/></g></svg>
<div class="b" style="left:266.5px;top:354.7px;width:1636.5px;height:190.00000000000006px;background:#fff;border-radius:8px;box-shadow:0 1px 3px rgba(0,0,0,0.13);"></div>
<div class="b" style="left:286.5px;top:377.59999999999997px;width:77.0px;height:42.10000000000002px;background:#333;border-radius:21px 0 0 21px;"></div>
<div class="b" style="left:363px;top:377.59999999999997px;width:251px;height:42.10000000000002px;background:#fff;border:1px solid #555;"></div>
<svg class="b" style="left:296.5px;top:387.59999999999997px;" width="22" height="22" viewBox="0 0 21 21"><path d="M1.500 3.200A1.700 1.700 0 0 1 3.200 1.500h6.300a2 2 0 0 1 1.400.600l8 8a2 2 0 0 1 0 2.800l-6 6a2 2 0 0 1-2.800 0l-8-8a2 2 0 0 1-.600-1.400z" fill="#fff"/><circle cx="5.800" cy="5.800" r="1.700" fill="#333"/></svg>
<span class="t" style="top:390.95px;font:600 16.6px/1 'Liberation Sans',sans-serif;color:#fff;letter-spacing:0.760px;left:323.50px;">Tag</span>
<span class="t" style="top:388.58px;font:400 19.4px/1 'Liberation Sans',sans-serif;color:#111;letter-spacing:0.908px;left:372.00px;-webkit-text-stroke:0.250px #111;">costcategory/department</span>
<svg class="b" style="left:643.5px;top:391.2px;" width="16" height="16" viewBox="0 0 21 21"><path d="M1.500 3.200A1.700 1.700 0 0 1 3.200 1.500h6.300a2 2 0 0 1 1.400.600l8 8a2 2 0 0 1 0 2.800l-6 6a2 2 0 0 1-2.800 0l-8-8a2 2 0 0 1-.600-1.400z" fill="#333"/><circle cx="5.800" cy="5.800" r="1.700" fill="#fff"/></svg>
<span class="t" style="top:392.03px;font:700 14.5px/1 'Liberation Sans',sans-serif;color:#333;letter-spacing:0.256px;left:669.50px;">Show / Hide Values</span>
<svg class="b" style="left:820.5px;top:393.7px;" width="7" height="10" viewBox="0 0 7 10"><path d="M1.500 1l4 4-4 4" fill="none" stroke="#333" stroke-width="1.300" stroke-linecap="round" stroke-linejoin="round"/></svg>
<span class="t" style="top:378.01px;font:400 17px/1 'Liberation Sans',sans-serif;color:#111;letter-spacing:0.622px;left:1638.00px;">Tagged Spend</span>
<svg class="b" style="left:1770px;top:381.7px;" width="7" height="10" viewBox="0 0 7 10"><path d="M1.500 1l4 4-4 4" fill="none" stroke="#333" stroke-width="1.300" stroke-linecap="round" stroke-linejoin="round"/></svg>
<span class="t" style="top:378.01px;font:400 17px/1 'Liberation Sans',sans-serif;color:#111;letter-spacing:-0.266px;left:1809.00px;">$1,545.83</span>
<span class="t" style="top:402.61px;font:400 17px/1 'Liberation Sans',sans-serif;color:#111;letter-spacing:0.645px;left:1627.50px;">Untagged Spend</span>
<svg class="b" style="left:1779.5px;top:406.2px;" width="7" height="10" viewBox="0 0 7 10"><path d="M1.500 1l4 4-4 4" fill="none" stroke="#333" stroke-width="1.300" stroke-linecap="round" stroke-linejoin="round"/></svg>
<span class="t" style="top:402.61px;font:400 17px/1 'Liberation Sans',sans-serif;color:#111;letter-spacing:-0.266px;left:1809.00px;">$1,398.99</span>
<div class="b" style="left:302.00px;top:430.00px;width:1450.40px;height:68px;background:linear-gradient(90deg,#7c68dc 0.00px,#8a66d4 31.00px,#6a70dc 31.00px,#6a70dc 457.60px,#6896dc 457.60px,#6896dc 1114.40px,#68b5dc 1114.40px,#68b5dc 1450.40px);"></div>
<span class="t" style="top:456.10px;font:700 13px/1 'Liberation Sans',sans-serif;color:#fff;letter-spacing:-0.741px;left:310.00px;-webkit-text-stroke:0.350px #fff;">B...</span>
<span class="t" style="top:456.10px;font:700 13px/1 'Liberation Sans',sans-serif;color:#fff;letter-spacing:-0.070px;right:1165.57px;-webkit-text-stroke:0.350px #fff;">Developers $441.23</span>
<span class="t" style="top:456.10px;font:700 13px/1 'Liberation Sans',sans-serif;color:#fff;letter-spacing:-0.173px;right:509.17px;-webkit-text-stroke:0.350px #fff;">Sales $1,074.40</span>
<span class="t" style="top:456.10px;font:700 13px/1 'Liberation Sans',sans-serif;color:#fff;letter-spacing:-0.031px;right:172.53px;-webkit-text-stroke:0.350px #fff;">Untagged Spend $1,398.99</span>
<div class="b" style="left:301.1px;top:504.4px;width:1556.8000000000002px;height:1.0px;background:#c2c2c2;"></div>
<div class="b" style="left:301.1px;top:504.7px;width:1.0px;height:8.000000000000057px;background:#c2c2c2;"></div>
<span class="t" style="top:511.32px;font:400 12.5px/1 'Liberation Sans',sans-serif;color:#757575;letter-spacing:-0.276px;left:-198.40px;width:1000px;text-align:center;text-indent:-0.276px;-webkit-text-stroke:0.200px #757575;">0.00</span>
<div class="b" style="left:612.3px;top:504.7px;width:1.0px;height:8.000000000000057px;background:#c2c2c2;"></div>
<span class="t" style="top:511.32px;font:400 12.5px/1 'Liberation Sans',sans-serif;color:#757575;letter-spacing:-0.147px;left:112.76px;width:1000px;text-align:center;text-indent:-0.147px;-webkit-text-stroke:0.200px #757575;">300.00</span>
<div class="b" style="left:923.4px;top:504.7px;width:1.0px;height:8.000000000000057px;background:#c2c2c2;"></div>
<span class="t" style="top:511.32px;font:400 12.5px/1 'Liberation Sans',sans-serif;color:#757575;letter-spacing:-0.147px;left:423.92px;width:1000px;text-align:center;text-indent:-0.147px;-webkit-text-stroke:0.200px #757575;">600.00</span>
<div class="b" style="left:1234.6px;top:504.7px;width:1.0px;height:8.000000000000057px;background:#c2c2c2;"></div>
<span class="t" style="top:511.32px;font:400 12.5px/1 'Liberation Sans',sans-serif;color:#757575;letter-spacing:-0.147px;left:735.08px;width:1000px;text-align:center;text-indent:-0.147px;-webkit-text-stroke:0.200px #757575;">900.00</span>
<div class="b" style="left:1545.7px;top:504.7px;width:1.0px;height:8.000000000000057px;background:#c2c2c2;"></div>
<span class="t" style="top:511.32px;font:400 12.5px/1 'Liberation Sans',sans-serif;color:#757575;letter-spacing:-0.114px;left:1046.24px;width:1000px;text-align:center;text-indent:-0.114px;-webkit-text-stroke:0.200px #757575;">1200.00</span>
<div class="b" style="left:1856.9px;top:504.7px;width:1.0px;height:8.000000000000057px;background:#c2c2c2;"></div>
<span class="t" style="top:511.32px;font:400 12.5px/1 'Liberation Sans',sans-serif;color:#757575;letter-spacing:-0.114px;left:1357.40px;width:1000px;text-align:center;text-indent:-0.114px;-webkit-text-stroke:0.200px #757575;">1500.00</span>
<div class="b" style="left:266.5px;top:562.3px;width:1636.5px;height:190.0px;background:#fff;border-radius:8px;box-shadow:0 1px 3px rgba(0,0,0,0.13);"></div>
<div class="b" style="left:286.5px;top:585.1999999999999px;width:77.0px;height:42.10000000000002px;background:#333;border-radius:21px 0 0 21px;"></div>
<div class="b" style="left:363px;top:585.1999999999999px;width:275.5px;height:42.10000000000002px;background:#fff;border:1px solid #555;"></div>
<svg class="b" style="left:296.5px;top:595.1999999999999px;" width="22" height="22" viewBox="0 0 21 21"><path d="M1.500 3.200A1.700 1.700 0 0 1 3.200 1.500h6.300a2 2 0 0 1 1.400.600l8 8a2 2 0 0 1 0 2.800l-6 6a2 2 0 0 1-2.800 0l-8-8a2 2 0 0 1-.600-1.400z" fill="#fff"/><circle cx="5.800" cy="5.800" r="1.700" fill="#333"/></svg>
<span class="t" style="top:598.55px;font:600 16.6px/1 'Liberation Sans',sans-serif;color:#fff;letter-spacing:0.760px;left:323.50px;">Tag</span>
<span class="t" style="top:596.18px;font:400 19.4px/1 'Liberation Sans',sans-serif;color:#111;letter-spacing:0.615px;left:372.00px;-webkit-text-stroke:0.250px #111;">resourcetags/aws:createdby</span>
<svg class="b" style="left:668px;top:598.8px;" width="16" height="16" viewBox="0 0 21 21"><path d="M1.500 3.200A1.700 1.700 0 0 1 3.200 1.500h6.300a2 2 0 0 1 1.400.600l8 8a2 2 0 0 1 0 2.800l-6 6a2 2 0 0 1-2.800 0l-8-8a2 2 0 0 1-.600-1.400z" fill="#333"/><circle cx="5.800" cy="5.800" r="1.700" fill="#fff"/></svg>
<span class="t" style="top:599.63px;font:700 14.5px/1 'Liberation Sans',sans-serif;color:#333;letter-spacing:0.256px;left:694.00px;">Show / Hide Values</span>
<svg class="b" style="left:845px;top:601.3px;" width="7" height="10" viewBox="0 0 7 10"><path d="M1.500 1l4 4-4 4" fill="none" stroke="#333" stroke-width="1.300" stroke-linecap="round" stroke-linejoin="round"/></svg>
<span class="t" style="top:585.61px;font:400 17px/1 'Liberation Sans',sans-serif;color:#111;letter-spacing:0.622px;left:1636.00px;">Tagged Spend</span>
<svg class="b" style="left:1768px;top:589.3px;" width="7" height="10" viewBox="0 0 7 10"><path d="M1.500 1l4 4-4 4" fill="none" stroke="#333" stroke-width="1.300" stroke-linecap="round" stroke-linejoin="round"/></svg>
<span class="t" style="top:585.61px;font:400 17px/1 'Liberation Sans',sans-serif;color:#111;letter-spacing:0.675px;left:1807.00px;">$565.94</span>
<span class="t" style="top:610.21px;font:400 17px/1 'Liberation Sans',sans-serif;color:#111;letter-spacing:0.645px;left:1625.50px;">Untagged Spend</span>
<svg class="b" style="left:1777.5px;top:613.8px;" width="7" height="10" viewBox="0 0 7 10"><path d="M1.500 1l4 4-4 4" fill="none" stroke="#333" stroke-width="1.300" stroke-linecap="round" stroke-linejoin="round"/></svg>
<span class="t" style="top:610.21px;font:400 17px/1 'Liberation Sans',sans-serif;color:#111;letter-spacing:-0.016px;left:1807.00px;">$2,378.88</span>
<div class="b" style="left:301.30px;top:638.00px;width:1480.70px;height:68px;background:linear-gradient(90deg,#70bfae 0.00px,#70bfae 2.20px,#8fd06a 2.20px,#8fd06a 4.00px,#e0b060 4.00px,#e0b060 4.80px,#e2627e 4.80px,#e2627e 7.60px,#dc60c4 7.60px,#c866dc 13.90px,#c868dc 13.90px,#c868dc 40.20px,#a868dc 40.20px,#9a68dc 52.80px,#8468dc 52.80px,#6e6cdc 58.70px,#6893dc 58.70px,#6893dc 82.70px,#68b5dc 82.70px,#68b5dc 1480.70px);"></div>
<span class="t" style="top:663.70px;font:700 13px/1 'Liberation Sans',sans-serif;color:#fff;letter-spacing:-1.418px;left:301.00px;-webkit-text-stroke:0.350px #fff;">...</span>
<span class="t" style="top:663.70px;font:700 13px/1 'Liberation Sans',sans-serif;color:#fff;letter-spacing:-0.992px;left:321.50px;-webkit-text-stroke:0.350px #fff;">I.AIR...</span>
<span class="t" style="top:663.70px;font:700 13px/1 'Liberation Sans',sans-serif;color:#fff;letter-spacing:-0.408px;left:360.40px;-webkit-text-stroke:0.350px #fff;">A...</span>
<span class="t" style="top:663.70px;font:700 13px/1 'Liberation Sans',sans-serif;color:#fff;letter-spacing:-0.031px;right:143.03px;-webkit-text-stroke:0.350px #fff;">Untagged Spend $2,378.88</span>
<div class="b" style="left:301.1px;top:712.0px;width:1556.8000000000002px;height:1.0px;background:#c2c2c2;"></div>
<div class="b" style="left:301.1px;top:712.3px;width:1.0px;height:8.0px;background:#c2c2c2;"></div>
<span class="t" style="top:718.92px;font:400 12.5px/1 'Liberation Sans',sans-serif;color:#757575;letter-spacing:-0.276px;left:-198.40px;width:1000px;text-align:center;text-indent:-0.276px;-webkit-text-stroke:0.200px #757575;">0.00</span>
<div class="b" style="left:612.3px;top:712.3px;width:1.0px;height:8.0px;background:#c2c2c2;"></div>
<span class="t" style="top:718.92px;font:400 12.5px/1 'Liberation Sans',sans-serif;color:#757575;letter-spacing:-0.147px;left:112.76px;width:1000px;text-align:center;text-indent:-0.147px;-webkit-text-stroke:0.200px #757575;">500.00</span>
<div class="b" style="left:923.4px;top:712.3px;width:1.0px;height:8.0px;background:#c2c2c2;"></div>
<span class="t" style="top:718.92px;font:400 12.5px/1 'Liberation Sans',sans-serif;color:#757575;letter-spacing:-0.114px;left:423.92px;width:1000px;text-align:center;text-indent:-0.114px;-webkit-text-stroke:0.200px #757575;">1000.00</span>
<div class="b" style="left:1234.6px;top:712.3px;width:1.0px;height:8.0px;background:#c2c2c2;"></div>
<span class="t" style="top:718.92px;font:400 12.5px/1 'Liberation Sans',sans-serif;color:#757575;letter-spacing:-0.114px;left:735.08px;width:1000px;text-align:center;text-indent:-0.114px;-webkit-text-stroke:0.200px #757575;">1500.00</span>
<div class="b" style="left:1545.7px;top:712.3px;width:1.0px;height:8.0px;background:#c2c2c2;"></div>
<span class="t" style="top:718.92px;font:400 12.5px/1 'Liberation Sans',sans-serif;color:#757575;letter-spacing:-0.114px;left:1046.24px;width:1000px;text-align:center;text-indent:-0.114px;-webkit-text-stroke:0.200px #757575;">2000.00</span>
<div class="b" style="left:1856.9px;top:712.3px;width:1.0px;height:8.0px;background:#c2c2c2;"></div>
<span class="t" style="top:718.92px;font:400 12.5px/1 'Liberation Sans',sans-serif;color:#757575;letter-spacing:-0.114px;left:1357.40px;width:1000px;text-align:center;text-indent:-0.114px;-webkit-text-stroke:0.200px #757575;">2500.00</span>
<div class="b" style="left:266.5px;top:769.3px;width:1636.5px;height:190.0px;background:#fff;border-radius:8px;box-shadow:0 1px 3px rgba(0,0,0,0.13);"></div>
<div class="b" style="left:286.5px;top:792.1999999999999px;width:77.0px;height:42.10000000000002px;background:#333;border-radius:21px 0 0 21px;"></div>
<div class="b" style="left:363px;top:792.1999999999999px;width:437.5px;height:42.10000000000002px;background:#fff;border:1px solid #555;"></div>
<svg class="b" style="left:296.5px;top:802.1999999999999px;" width="22" height="22" viewBox="0 0 21 21"><path d="M1.500 3.200A1.700 1.700 0 0 1 3.200 1.500h6.300a2 2 0 0 1 1.400.600l8 8a2 2 0 0 1 0 2.800l-6 6a2 2 0 0 1-2.800 0l-8-8a2 2 0 0 1-.600-1.400z" fill="#fff"/><circle cx="5.800" cy="5.800" r="1.700" fill="#333"/></svg>
<span class="t" style="top:805.55px;font:600 16.6px/1 'Liberation Sans',sans-serif;color:#fff;letter-spacing:0.760px;left:323.50px;">Tag</span>
<span class="t" style="top:803.18px;font:400 19.4px/1 'Liberation Sans',sans-serif;color:#111;letter-spacing:0.711px;left:372.00px;-webkit-text-stroke:0.250px #111;">resourcetags/aws:cloudformation:stack-name</span>
<svg class="b" style="left:830px;top:805.8px;" width="16" height="16" viewBox="0 0 21 21"><path d="M1.500 3.200A1.700 1.700 0 0 1 3.200 1.500h6.300a2 2 0 0 1 1.400.600l8 8a2 2 0 0 1 0 2.800l-6 6a2 2 0 0 1-2.800 0l-8-8a2 2 0 0 1-.600-1.400z" fill="#333"/><circle cx="5.800" cy="5.800" r="1.700" fill="#fff"/></svg>
<span class="t" style="top:806.63px;font:700 14.5px/1 'Liberation Sans',sans-serif;color:#333;letter-spacing:0.256px;left:856.00px;">Show / Hide Values</span>
<svg class="b" style="left:1007px;top:808.3px;" width="7" height="10" viewBox="0 0 7 10"><path d="M1.500 1l4 4-4 4" fill="none" stroke="#333" stroke-width="1.300" stroke-linecap="round" stroke-linejoin="round"/></svg>
<span class="t" style="top:792.61px;font:400 17px/1 'Liberation Sans',sans-serif;color:#111;letter-spacing:0.622px;left:1636.00px;">Tagged Spend</span>
<svg class="b" style="left:1768px;top:796.3px;" width="7" height="10" viewBox="0 0 7 10"><path d="M1.500 1l4 4-4 4" fill="none" stroke="#333" stroke-width="1.300" stroke-linecap="round" stroke-linejoin="round"/></svg>
<span class="t" style="top:792.61px;font:400 17px/1 'Liberation Sans',sans-serif;color:#111;letter-spacing:-0.075px;left:1807.00px;">$272.34</span>
<span class="t" style="top:817.71px;font:400 17px/1 'Liberation Sans',sans-serif;color:#111;letter-spacing:0.645px;left:1625.50px;">Untagged Spend</span>
<svg class="b" style="left:1777.5px;top:821.3px;" width="7" height="10" viewBox="0 0 7 10"><path d="M1.500 1l4 4-4 4" fill="none" stroke="#333" stroke-width="1.300" stroke-linecap="round" stroke-linejoin="round"/></svg>
<span class="t" style="top:817.71px;font:400 17px/1 'Liberation Sans',sans-serif;color:#111;letter-spacing:-0.016px;left:1807.00px;">$2,672.48</span>
<div class="b" style="left:301.80px;top:845.00px;width:1385.80px;height:68px;background:linear-gradient(90deg,#e060a8 0.00px,#c066d8 2.80px,#a468dc 2.80px,#a468dc 20.10px,#8868dc 20.10px,#8868dc 31.10px,#6870dc 31.10px,#6870dc 32.70px,#6895dc 32.70px,#6895dc 51.20px,#68b5dc 51.20px,#68b5dc 1385.80px);"></div>
<span class="t" style="top:870.70px;font:700 13px/1 'Liberation Sans',sans-serif;color:#fff;letter-spacing:-1.722px;left:301.80px;-webkit-text-stroke:0.350px #fff;">IMIL...</span>
<span class="t" style="top:870.70px;font:700 13px/1 'Liberation Sans',sans-serif;color:#fff;letter-spacing:-0.255px;left:332.50px;-webkit-text-stroke:0.350px #fff;">e...</span>
<span class="t" style="top:870.70px;font:700 13px/1 'Liberation Sans',sans-serif;color:#fff;letter-spacing:-0.031px;right:237.53px;-webkit-text-stroke:0.350px #fff;">Untagged Spend $2,672.48</span>
<div class="b" style="left:301.1px;top:919.0px;width:1556.8000000000002px;height:1.0px;background:#c2c2c2;"></div>
<div class="b" style="left:301.1px;top:919.3px;width:1.0px;height:8.0px;background:#c2c2c2;"></div>
<span class="t" style="top:925.92px;font:400 12.5px/1 'Liberation Sans',sans-serif;color:#757575;letter-spacing:-0.276px;left:-198.40px;width:1000px;text-align:center;text-indent:-0.276px;-webkit-text-stroke:0.200px #757575;">0.00</span>
<div class="b" style="left:560.4px;top:919.3px;width:1.0px;height:8.0px;background:#c2c2c2;"></div>
<span class="t" style="top:925.92px;font:400 12.5px/1 'Liberation Sans',sans-serif;color:#757575;letter-spacing:-0.147px;left:60.90px;width:1000px;text-align:center;text-indent:-0.147px;-webkit-text-stroke:0.200px #757575;">500.00</span>
<div class="b" style="left:819.7px;top:919.3px;width:1.0px;height:8.0px;background:#c2c2c2;"></div>
<span class="t" style="top:925.92px;font:400 12.5px/1 'Liberation Sans',sans-serif;color:#757575;letter-spacing:-0.114px;left:320.20px;width:1000px;text-align:center;text-indent:-0.114px;-webkit-text-stroke:0.200px #757575;">1000.00</span>
<div class="b" style="left:1079.0px;top:919.3px;width:1.0px;height:8.0px;background:#c2c2c2;"></div>
<span class="t" style="top:925.92px;font:400 12.5px/1 'Liberation Sans',sans-serif;color:#757575;letter-spacing:-0.114px;left:579.50px;width:1000px;text-align:center;text-indent:-0.114px;-webkit-text-stroke:0.200px #757575;">1500.00</span>
<div class="b" style="left:1338.3px;top:919.3px;width:1.0px;height:8.0px;background:#c2c2c2;"></div>
<span class="t" style="top:925.92px;font:400 12.5px/1 'Liberation Sans',sans-serif;color:#757575;letter-spacing:-0.114px;left:838.80px;width:1000px;text-align:center;text-indent:-0.114px;-webkit-text-stroke:0.200px #757575;">2000.00</span>
<div class="b" style="left:1597.6px;top:919.3px;width:1.0px;height:8.0px;background:#c2c2c2;"></div>
<span class="t" style="top:925.92px;font:400 12.5px/1 'Liberation Sans',sans-serif;color:#757575;letter-spacing:-0.114px;left:1098.10px;width:1000px;text-align:center;text-indent:-0.114px;-webkit-text-stroke:0.200px #757575;">2500.00</span>
<div class="b" style="left:1856.9px;top:919.3px;width:1.0px;height:8.0px;background:#c2c2c2;"></div>
<span class="t" style="top:925.92px;font:400 12.5px/1 'Liberation Sans',sans-serif;color:#757575;letter-spacing:-0.114px;left:1357.40px;width:1000px;text-align:center;text-indent:-0.114px;-webkit-text-stroke:0.200px #757575;">3000.00</span>
<div class="b" style="left:251px;top:0;width:1669px;height:1071.500px;overflow:hidden;"><div class="b" style="left:-251px;top:0;width:1920px;height:1300px;"><div class="b" style="left:266.5px;top:976.6px;width:1636.5px;height:189.9999999999999px;background:#fff;border-radius:8px;box-shadow:0 1px 3px rgba(0,0,0,0.13);"></div>
<div class="b" style="left:286.5px;top:999.5px;width:77.0px;height:42.09999999999991px;background:#333;border-radius:21px 0 0 21px;"></div>
<div class="b" style="left:363px;top:999.5px;width:274.5px;height:42.09999999999991px;background:#fff;border:1px solid #555;"></div>
<svg class="b" style="left:296.5px;top:1009.5px;" width="22" height="22" viewBox="0 0 21 21"><path d="M1.500 3.200A1.700 1.700 0 0 1 3.200 1.500h6.300a2 2 0 0 1 1.400.600l8 8a2 2 0 0 1 0 2.800l-6 6a2 2 0 0 1-2.800 0l-8-8a2 2 0 0 1-.600-1.400z" fill="#fff"/><circle cx="5.800" cy="5.800" r="1.700" fill="#333"/></svg>
<span class="t" style="top:1012.85px;font:600 16.6px/1 'Liberation Sans',sans-serif;color:#fff;letter-spacing:0.760px;left:323.50px;">Tag</span>
<span class="t" style="top:1010.48px;font:400 19.4px/1 'Liberation Sans',sans-serif;color:#111;letter-spacing:0.471px;left:372.00px;-webkit-text-stroke:0.250px #111;">resourcetags/user:persistent</span>
<svg class="b" style="left:667px;top:1013.1px;" width="16" height="16" viewBox="0 0 21 21"><path d="M1.500 3.200A1.700 1.700 0 0 1 3.200 1.500h6.300a2 2 0 0 1 1.400.600l8 8a2 2 0 0 1 0 2.800l-6 6a2 2 0 0 1-2.800 0l-8-8a2 2 0 0 1-.600-1.400z" fill="#333"/><circle cx="5.800" cy="5.800" r="1.700" fill="#fff"/></svg>
<span class="t" style="top:1013.93px;font:700 14.5px/1 'Liberation Sans',sans-serif;color:#333;letter-spacing:0.256px;left:693.00px;">Show / Hide Values</span>
<svg class="b" style="left:844px;top:1015.6px;" width="7" height="10" viewBox="0 0 7 10"><path d="M1.500 1l4 4-4 4" fill="none" stroke="#333" stroke-width="1.300" stroke-linecap="round" stroke-linejoin="round"/></svg>
<span class="t" style="top:999.91px;font:400 17px/1 'Liberation Sans',sans-serif;color:#111;letter-spacing:0.622px;left:1634.50px;">Tagged Spend</span>
<svg class="b" style="left:1766.5px;top:1003.6px;" width="7" height="10" viewBox="0 0 7 10"><path d="M1.500 1l4 4-4 4" fill="none" stroke="#333" stroke-width="1.300" stroke-linecap="round" stroke-linejoin="round"/></svg>
<span class="t" style="top:999.91px;font:400 17px/1 'Liberation Sans',sans-serif;color:#111;letter-spacing:0.091px;left:1806.00px;">$240.77</span>
<span class="t" style="top:1024.51px;font:400 17px/1 'Liberation Sans',sans-serif;color:#111;letter-spacing:0.645px;left:1624.50px;">Untagged Spend</span>
<svg class="b" style="left:1776.5px;top:1028.1000000000001px;" width="7" height="10" viewBox="0 0 7 10"><path d="M1.500 1l4 4-4 4" fill="none" stroke="#333" stroke-width="1.300" stroke-linecap="round" stroke-linejoin="round"/></svg>
<span class="t" style="top:1024.51px;font:400 17px/1 'Liberation Sans',sans-serif;color:#111;letter-spacing:0.109px;left:1806.00px;">$2,704.05</span>
<div class="b" style="left:301.1px;top:1126.3px;width:1556.8000000000002px;height:1.0px;background:#c2c2c2;"></div>
<div class="b" style="left:301.1px;top:1126.6px;width:1.0px;height:8.0px;background:#c2c2c2;"></div>
<span class="t" style="top:1133.22px;font:400 12.5px/1 'Liberation Sans',sans-serif;color:#757575;letter-spacing:-0.276px;left:-198.40px;width:1000px;text-align:center;text-indent:-0.276px;-webkit-text-stroke:0.200px #757575;">0.00</span>
<div class="b" style="left:560.4px;top:1126.6px;width:1.0px;height:8.0px;background:#c2c2c2;"></div>
<span class="t" style="top:1133.22px;font:400 12.5px/1 'Liberation Sans',sans-serif;color:#757575;letter-spacing:-0.147px;left:60.90px;width:1000px;text-align:center;text-indent:-0.147px;-webkit-text-stroke:0.200px #757575;">500.00</span>
<div class="b" style="left:819.7px;top:1126.6px;width:1.0px;height:8.0px;background:#c2c2c2;"></div>
<span class="t" style="top:1133.22px;font:400 12.5px/1 'Liberation Sans',sans-serif;color:#757575;letter-spacing:-0.114px;left:320.20px;width:1000px;text-align:center;text-indent:-0.114px;-webkit-text-stroke:0.200px #757575;">1000.00</span>
<div class="b" style="left:1079.0px;top:1126.6px;width:1.0px;height:8.0px;background:#c2c2c2;"></div>
<span class="t" style="top:1133.22px;font:400 12.5px/1 'Liberation Sans',sans-serif;color:#757575;letter-spacing:-0.114px;left:579.50px;width:1000px;text-align:center;text-indent:-0.114px;-webkit-text-stroke:0.200px #757575;">1500.00</span>
<div class="b" style="left:1338.3px;top:1126.6px;width:1.0px;height:8.0px;background:#c2c2c2;"></div>
<span class="t" style="top:1133.22px;font:400 12.5px/1 'Liberation Sans',sans-serif;color:#757575;letter-spacing:-0.114px;left:838.80px;width:1000px;text-align:center;text-indent:-0.114px;-webkit-text-stroke:0.200px #757575;">2000.00</span>
<div class="b" style="left:1597.6px;top:1126.6px;width:1.0px;height:8.0px;background:#c2c2c2;"></div>
<span class="t" style="top:1133.22px;font:400 12.5px/1 'Liberation Sans',sans-serif;color:#757575;letter-spacing:-0.114px;left:1098.10px;width:1000px;text-align:center;text-indent:-0.114px;-webkit-text-stroke:0.200px #757575;">2500.00</span>
<div class="b" style="left:1856.9px;top:1126.6px;width:1.0px;height:8.0px;background:#c2c2c2;"></div>
<span class="t" style="top:1133.22px;font:400 12.5px/1 'Liberation Sans',sans-serif;color:#757575;letter-spacing:-0.114px;left:1357.40px;width:1000px;text-align:center;text-indent:-0.114px;-webkit-text-stroke:0.200px #757575;">3000.00</span></div></div>
<div class="b" style="left:251px;top:1071.5px;width:1669px;height:8.5px;background:#f7f7f7;"></div>
</div></body></html>
